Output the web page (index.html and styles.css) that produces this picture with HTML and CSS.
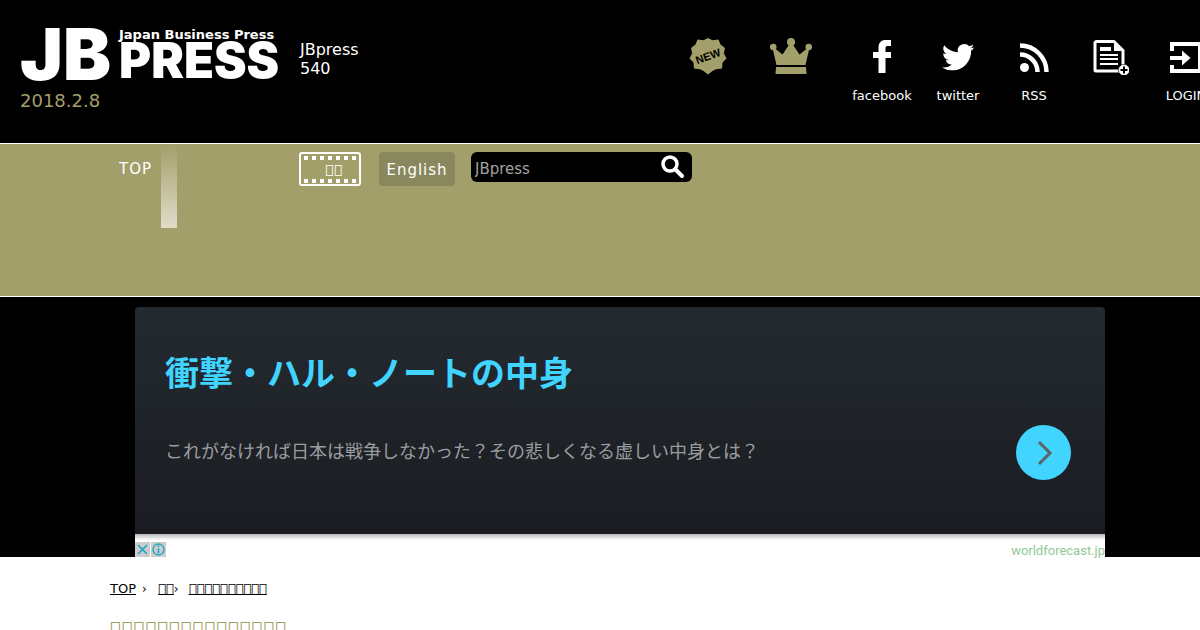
FILE: index.html
```html
<!DOCTYPE html>
<html lang="ja">
<head>
  <meta charset="UTF-8" />
  <meta name="viewport" content="width=device-width, initial-scale=1" />
  <title>JBpress</title>
  <link rel="stylesheet" href="styles.css">
</head>
<body>

  <!-- Header -->
  <header class="header">
    <div class="brand">
      <a class="logo" href="#">
        <span class="logo-jb">JB</span>
        <span class="logo-side">
          <span class="logo-tagline">Japan Business Press</span>
          <span class="logo-press">PRESS</span>
        </span>
      </a>
      <div class="date">2018.2.8</div>
    </div>
    <p class="about">JBpress<br>540</p>

    <ul class="tools">
      <li class="wide">
        <a href="#" aria-label="New">
          <svg width="38" height="38" viewBox="0 0 38 38">
            <path fill="#a39f6b" d="M19 1 L23.5 3.2 L29.5 2.5 L31.5 7.5 L36 11 L34.8 16.3 L37.5 21.5 L33.5 25.5 L33 31.5 L27 32.3 L23.5 34 L19 37.5 L14.5 34 L11 32.3 L5 31.5 L4.500 25.5 L.5 21.500 L3.200 16.3 L2 11 L6.500 7.5 L8.500 2.500 L14.500 3.200Z"/>
            <text x="19" y="23" text-anchor="middle" transform="rotate(-20 19 19)" font-family="Liberation Sans, sans-serif" font-weight="bold" font-size="11">NEW</text>
          </svg>
        </a>
      </li>
      <li class="wide">
        <a href="#" aria-label="Ranking">
          <svg width="42" height="38" viewBox="0 0 42 38">
            <g fill="#a39f6b">
              <circle cx="21" cy="5" r="4"/>
              <circle cx="3.200" cy="10" r="3.300"/>
              <circle cx="38.800" cy="10" r="3.300"/>
              <path d="M19.500 7h3l7 10.500L37 11.500l2 1.500-3.500 15h-29L3 13l2-1.500L12.500 17.500Z"/>
              <path d="M6 30h30l.5 7h-31Z"/>
            </g>
          </svg>
        </a>
      </li>
      <li class="first">
        <a href="#">
          <svg width="38" height="38" viewBox="0 0 38 38">
            <path fill="#fff" d="M28 3v6h-3.500c-1.500 0-2 .7-2 2.200V15H28v6h-5.500v15H15.500V21H10v-6h5.500v-4.500C15.500 5.500 18.500 3 22.500 3Z"/>
          </svg>
          <span>facebook</span>
        </a>
      </li>
      <li>
        <a href="#">
          <svg width="38" height="38" viewBox="0 0 38 38">
            <path fill="#fff" transform="translate(3 4) scale(1.350)" d="M23.950 4.570a10 10 0 0 1-2.820.78 4.960 4.960 0 0 0 2.160-2.730c-.95.560-2 .96-3.130 1.190a4.920 4.920 0 0 0-8.380 4.480C7.690 8.090 4.070 6.130 1.640 3.160a4.920 4.920 0 0 0 1.520 6.570 4.900 4.900 0 0 1-2.230-.61v.06a4.920 4.920 0 0 0 3.950 4.830 5 5 0 0 1-2.210.08 4.940 4.940 0 0 0 4.600 3.420A9.870 9.870 0 0 1 0 19.540a14 14 0 0 0 7.550 2.210c9.050 0 14-7.500 14-13.980 0-.21 0-.42-.02-.63a9.940 9.940 0 0 0 2.420-2.570Z"/>
          </svg>
          <span>twitter</span>
        </a>
      </li>
      <li>
        <a href="#">
          <svg width="38" height="38" viewBox="0 0 38 38">
            <circle cx="9.500" cy="30.500" r="4.500" fill="#fff"/>
            <g fill="none" stroke="#fff" stroke-width="4.500">
              <path d="M5 17.500A17.500 17.500 0 0 1 22.500 35"/>
              <path d="M5 8.500A26.500 26.500 0 0 1 31.500 35"/>
            </g>
          </svg>
          <span>RSS</span>
        </a>
      </li>
      <li>
        <a href="#" aria-label="Article list">
          <svg width="38" height="38" viewBox="0 0 38 38">
            <path fill="none" stroke="#fff" stroke-width="3" stroke-linejoin="round" d="M5 4.500h18l9 9V34H5a1 1 0 0 1-1-1V5.500Z"/>
            <path fill="#fff" d="M23 4l10 10H23ZM9 10h11v4H9ZM9 17h18v2H9ZM9 21h18v2H9ZM9 26h18v2H9Z"/>
            <circle cx="33" cy="33" r="6" fill="#000"/>
            <circle cx="33" cy="33" r="5" fill="#fff"/>
            <circle cx="33" cy="33" r="5" fill="none" stroke="#fff"/>
            <path stroke="#000" stroke-width="2" d="M29.500 33h7M33 29.500v7"/>
          </svg>
        </a>
      </li>
      <li>
        <a href="#">
          <svg width="38" height="38" viewBox="0 0 38 38">
            <path fill="none" stroke="#fff" stroke-width="4" d="M5 14V7h28v27H5V28"/>
            <path fill="#fff" d="M3 19h12v-5.500l8.500 7.500-8.500 7.500v-5.500H3Z"/>
          </svg>
          <span>LOGIN</span>
        </a>
      </li>
    </ul>
  </header>

  <!-- Global navigation -->
  <nav class="nav">
    <a class="nav-top" href="#">TOP</a>
    <div class="nav-shade"></div>
    <a class="film" href="#">&#xF0000;&#xF0000;</a>
    <button class="lang" type="button">English</button>
    <form class="search">
      <input type="text" placeholder="JBpress" aria-label="Search">
      <button type="button" aria-label="Search">
        <svg width="26" height="26" viewBox="0 0 26 26">
          <circle cx="10" cy="10" r="7" fill="none" stroke="#fff" stroke-width="3.500"/>
          <path stroke="#fff" stroke-width="4" stroke-linecap="round" d="M15.500 15.500l6.500 6.500"/>
        </svg>
      </button>
    </form>
  </nav>

  <!-- Ad -->
  <section class="ad-area">
    <div class="ad">
      <div class="ad-body">
        <div class="ad-text">
          <h2>衝撃・ハル・ノートの中身</h2>
          <p>これがなければ日本は戦争しなかった？その悲しくなる虚しい中身とは？</p>
        </div>
        <a class="ad-go" href="#" aria-label="Open">
          <svg width="55" height="55" viewBox="0 0 55 55">
            <path fill="none" stroke="#5d6468" stroke-width="3" d="M23 17l11 11-11 11"/>
          </svg>
        </a>
      </div>
      <div class="ad-foot">
        <div class="ad-marks">
          <button type="button" aria-label="Close">
            <svg width="15" height="15" viewBox="0 0 15 15">
              <path stroke="#18a3c4" stroke-width="1.500" d="M3 3l9 9M12 3l-9 9"/>
            </svg>
          </button>
          <button type="button" aria-label="Info">
            <svg width="15" height="15" viewBox="0 0 15 15">
              <circle cx="7.500" cy="7.500" r="5.500" fill="none" stroke="#18a3c4" stroke-width="1.300"/>
              <path stroke="#18a3c4" stroke-width="1.500" d="M7.500 6.500v5M7.500 3.500v1.500"/>
            </svg>
          </button>
        </div>
        <a class="ad-domain" href="#">worldforecast.jp</a>
      </div>
    </div>
  </section>

  <!-- Article -->
  <main class="content">
    <div class="crumbs">
      <a href="#">TOP</a><span>›</span>
      <a href="#">&#xF0000;&#xF0000;</a><span class="tight">›</span>
      <a href="#">&#xF0000;&#xF0000;&#xF0000;&#xF0000;&#xF0000;&#xF0000;&#xF0000;&#xF0000;&#xF0000;&#xF0000;</a>
    </div>
    <p class="series">&#xF0000;&#xF0000;&#xF0000;&#xF0000;&#xF0000;&#xF0000;&#xF0000;&#xF0000;&#xF0000;&#xF0000;&#xF0000;&#xF0000;&#xF0000;&#xF0000;&#xF0000;</p>
  </main>

</body>
</html>
```
FILE: styles.css
```css
* { box-sizing: border-box; margin: 0; padding: 0; }
body {
  font-family: "DejaVu Sans", "Noto Sans CJK JP", sans-serif;
  background: #fff;
  color: #000;
  overflow-x: hidden;
}
a { color: inherit; text-decoration: none; }
button { border: none; background: none; font: inherit; color: inherit; cursor: pointer; }
svg { display: block; }

/* header */
.header {
  display: flex;
  align-items: flex-start;
  height: 144px;
  padding: 28px 0 0 20px;
  background: #000;
  color: #fff;
  border-bottom: 1px solid #fff;
  overflow: hidden;
}
.brand { width: 280px; flex: none; }
.logo {
  display: flex;
  height: 52px;
  font-family: Inter, "Liberation Sans", sans-serif;
  font-weight: 900;
}
.logo-jb { width: 99px; font-size: 72px; line-height: 52px; }
.logo-side { display: flex; flex-direction: column; }
.logo-tagline {
  font: bold 13px/13px "DejaVu Sans", sans-serif;
  white-space: nowrap;
}
.logo-press { font-size: 49px; line-height: 40px; }
.date {
  margin-top: 10px;
  font-size: 18px;
  line-height: 22px;
  color: #a39f6b;
}
.about {
  margin-top: 12px;
  font-size: 16px;
  line-height: 19px;
}
.tools {
  display: flex;
  flex: none;
  margin: 9px -24px 0 auto;
  list-style: none;
}
.tools li { width: 76px; }
.tools .wide { width: 83px; }
.tools .first { margin-left: 12px; }
.tools a {
  display: flex;
  flex-direction: column;
  align-items: center;
  gap: 12px;
  font-size: 13px;
  line-height: 18px;
}

/* navigation */
.nav {
  display: flex;
  align-items: flex-start;
  height: 153px;
  padding-left: 119px;
  background: #a39f6b;
  color: #fff;
  border-bottom: 1px solid #fff;
  font-size: 15px;
  letter-spacing: 1px;
}
.nav-top { width: 42px; margin-top: 8px; line-height: 34px; }
.nav-shade {
  width: 16px;
  height: 84px;
  margin-right: 122px;
  background: linear-gradient(rgba(255,255,255,0), rgba(240,235,225,0.8));
}
.film {
  width: 62px;
  height: 34px;
  margin: 8px 18px 0 0;
  padding-left: 8px;
  border: 2px solid #fff;
  border-radius: 3px;
  background:
    repeating-linear-gradient(90deg, #fff 0 4px, transparent 4px 8px) 3px 2px / 52px 4px no-repeat,
    repeating-linear-gradient(90deg, #fff 0 4px, transparent 4px 8px) 3px 25px / 52px 4px no-repeat;
  font-size: 13px;
  line-height: 32px;
  text-align: center;
}
.lang {
  width: 76px;
  height: 34px;
  margin: 8px 16px 0 0;
  padding-top: 1px;
  background: #89875d;
  border-radius: 4px;
  letter-spacing: 1px;
}
.search {
  display: flex;
  align-items: center;
  width: 221px;
  height: 30px;
  margin-top: 8px;
  padding: 0 6px 0 4px;
  background: #000;
  border-radius: 6px;
}
.search input {
  flex: 1;
  min-width: 0;
  height: 30px;
  padding-top: 3px;
  border: none;
  outline: none;
  background: none;
  font: 15px "DejaVu Sans", sans-serif;
  color: #fff;
}
.search input::placeholder { color: #a0a0a0; }

/* ad */
.ad-area {
  padding: 10px 0 0 40px;
  background: #000;
}
.ad { max-width: 970px; margin: 0 auto; }
.ad-body {
  display: flex;
  justify-content: space-between;
  align-items: flex-start;
  height: 227px;
  padding: 40px 34px 0 30px;
  background: linear-gradient(#232b30, #1b1c21);
  border-radius: 4px 4px 0 0;
  font-family: "Noto Sans CJK JP", sans-serif;
}
.ad-text h2 {
  font-size: 34px;
  line-height: 50px;
  color: #40d4ff;
}
.ad-text p {
  margin-top: 39px;
  font-size: 18px;
  line-height: 28px;
  color: #9a9da0;
}
.ad-go {
  width: 55px;
  height: 55px;
  margin-top: 78px;
  background: #40d4ff;
  border-radius: 50%;
}
.ad-foot {
  display: flex;
  justify-content: space-between;
  align-items: flex-end;
  height: 23px;
  background: linear-gradient(#b8b8b8, #fff 6px);
}
.ad-marks { display: flex; gap: 1px; }
.ad-marks button { width: 15px; height: 15px; background: #ccc; }
.ad-domain {
  font-family: Roboto, sans-serif;
  font-size: 13px;
  line-height: 13px;
  color: #93c993;
}

/* article */
.content { padding: 23px 110px 40px; }
.crumbs {
  display: flex;
  font-size: 12px;
  line-height: 18px;
}
.crumbs a {
  font-size: 13px;
  text-decoration: underline;
  text-decoration-skip-ink: none;
}
.crumbs span { width: 22px; padding-left: 6px; }
.crumbs .tight { width: 15px; padding-left: 0; }
.series {
  margin-top: 19px;
  font-size: 18px;
  line-height: 24px;
  letter-spacing: 1px;
  color: #a39f6b;
}
```
